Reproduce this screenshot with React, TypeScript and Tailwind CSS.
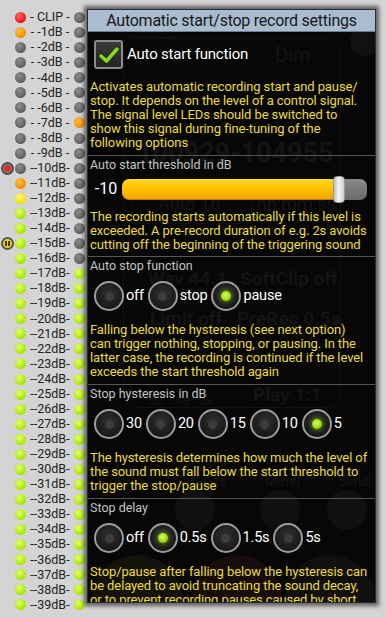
import React from "react";

type LedColor = "gray" | "red" | "orange" | "yellow" | "lime";

const ledClass: Record<LedColor, string> = {
  gray: "bg-[radial-gradient(circle_at_40%_35%,#8c8c8c,#5c5c5c_75%)]",
  red: "bg-[radial-gradient(circle_at_40%_35%,#ff6a6a,#ee0d0d_70%)]",
  orange: "bg-[radial-gradient(circle_at_40%_35%,#ffc04a,#f08c00_70%)]",
  yellow: "bg-[radial-gradient(circle_at_40%_35%,#fff58a,#f2de00_70%)]",
  lime: "bg-[radial-gradient(circle_at_40%_35%,#e2ff6a,#a6e600_70%)]",
};

function leftColor(i: number): LedColor {
  if (i === 0) return "red";
  if (i === 1 || i === 11) return "orange";
  if (i === 12) return "yellow";
  if (i >= 13) return "lime";
  return "gray";
}

function rightColor(i: number): LedColor {
  if (i === 7) return "orange";
  if (i >= 17) return "lime";
  return "gray";
}

function label(i: number) {
  if (i === 0) return "- CLIP -";
  if (i < 10) return `- -${i}dB -`;
  return `--${i}dB-`;
}

function Led({ color }: { color: LedColor }) {
  return <div className={`w-[11px] h-[11px] rounded-full shrink-0 ${ledClass[color]}`} />;
}

function LedColumn() {
  const rows = Array.from({ length: 40 }, (_, i) => i);
  return (
    <div className="w-[87px] shrink-0 pt-[10px] flex flex-col">
      {rows.map((i) => (
        <div key={i} className="h-[15.07px] flex items-center">
          <div className="w-[15px] flex justify-center items-center">
            {i === 10 && (
              <div className="w-[13px] h-[13px] rounded-full border-2 border-[#4a4a4a] bg-[#8a8a8a] flex items-center justify-center">
                <div className="w-[7px] h-[7px] rounded-full bg-[#e02a2a]" />
              </div>
            )}
            {i === 15 && (
              <div className="w-[13px] h-[13px] rounded-full border-2 border-[#555] bg-[#f5d800] flex items-center justify-center gap-[1px]">
                <div className="w-[2px] h-[5px] bg-[#3a3a3a]" />
                <div className="w-[2px] h-[5px] bg-[#3a3a3a]" />
              </div>
            )}
          </div>
          <Led color={leftColor(i)} />
          <div className="w-[48px] text-center whitespace-pre text-[12.5px] leading-none text-[#222]">
            {label(i)}
          </div>
          <Led color={rightColor(i)} />
        </div>
      ))}
    </div>
  );
}

function Radio({ on }: { on?: boolean }) {
  return (
    <div className="w-[30px] h-[30px] shrink-0 rounded-full border-2 border-[#9d9d9d] bg-[radial-gradient(circle_at_50%_40%,#303030,#161616_80%)] flex items-center justify-center">
      {on ? (
        <div className="w-[10px] h-[10px] rounded-full bg-[radial-gradient(circle_at_45%_40%,#d8ff60,#8fd400_70%)] shadow-[0_0_4px_1px_rgba(150,230,0,0.5)]" />
      ) : (
        <div className="w-[9px] h-[9px] rounded-full bg-[#3c3c3c]" />
      )}
    </div>
  );
}

function RadioRow({ items, selected }: { items: string[]; selected: number }) {
  return (
    <div className="flex items-center pl-[4px] mt-[7px]">
      {items.map((t, i) => (
        <div key={t} className="flex items-center mr-[4px]">
          <Radio on={i === selected} />
          <span className="ml-[2px] text-[14.5px] tracking-[-0.2px] text-white">{t}</span>
        </div>
      ))}
    </div>
  );
}

function Divider() {
  return <div className="h-px bg-[#555] mx-[-2px]" />;
}

function Caption({ children }: { children: React.ReactNode }) {
  return <div className="mt-[1px] text-[12.5px] leading-[16px] text-[#c4c4c4]">{children}</div>;
}

function Help({ children, className = "" }: { children: React.ReactNode; className?: string }) {
  return (
    <p className={`pr-[4px] text-[13px] tracking-[-0.1px] leading-[14px] text-[#ecda3c] ${className}`}>
      {children}
    </p>
  );
}

// the recorder screen that shows faintly through the dialog
function Backdrop() {
  return (
    <div className="absolute inset-0 text-[#141414] whitespace-nowrap pointer-events-none">
      <div className="absolute left-[35px] top-[6px] w-[218px] h-[370px] rounded-[14px] border border-[#111]" />
      <div className="absolute left-[262px] top-[-6px] w-[30px] h-[30px] rounded-full bg-[#111]" />
      <div className="absolute left-[40px] top-[2px] text-[5px] text-[#221414]">PfitzingerVoiceDesign</div>
      <div className="absolute left-[187px] top-[8px] text-[20px]">Dim</div>
      <div className="absolute left-[49px] top-[101px] text-[27px] font-bold">100929-104955</div>
      <div className="absolute left-[44px] top-[148px] w-[120px] h-[44px] border border-[#121212]" />
      <div className="absolute left-[70px] top-[158px] text-[18px]">Auto 16</div>
      <div className="absolute left-[169px] top-[158px] text-[18px]">hh:mm:ss</div>
      <div className="absolute left-[60px] top-[233px] text-[19px] font-bold">Wav 44.1</div>
      <div className="absolute left-[152px] top-[233px] text-[19px] font-bold">SoftClip off</div>
      <div className="absolute left-[88px] top-[252px] text-[10px]">ntative</div>
      <div className="absolute left-[62px] top-[273px] text-[19px] font-bold">Limit off</div>
      <div className="absolute left-[149px] top-[273px] text-[19px] font-bold">PreRec 0.5s</div>
      <div className="absolute left-[165px] top-[349px] text-[19px] font-bold">Play 1:1</div>
      <div className="absolute left-[60px] top-[364px] text-[9px]">100&nbsp;&nbsp;&nbsp;1kHz&nbsp;&nbsp;&nbsp;10k</div>
      <div className="absolute left-[25px] top-[439px] text-[14px]">Auto</div>
      <div className="absolute left-[87px] top-[439px] text-[14px]">Settings</div>
      <div className="absolute left-[177px] top-[439px] text-[14px]">Meter</div>
      <div className="absolute left-[250px] top-[439px] text-[14px]">Send</div>
      <div className="absolute left-[87px] top-[458px] w-[40px] h-[40px] rounded-full bg-[#101010]" />
      <div className="absolute left-[172px] top-[458px] w-[40px] h-[40px] rounded-full bg-[#101010]" />
      <div className="absolute left-[239px] top-[458px] w-[40px] h-[40px] rounded-full bg-[#101010]" />
      <div className="absolute left-[4px] top-[523px] w-[90px] h-[90px] rounded-full bg-[#14130b]" />
      <div className="absolute left-[104px] top-[523px] w-[90px] h-[90px] rounded-full bg-[#170d0d]" />
      <div className="absolute left-[197px] top-[523px] w-[90px] h-[90px] rounded-full bg-[#101010]" />
    </div>
  );
}

export default function App() {
  return (
    <div className="w-[386px] h-[618px] overflow-hidden bg-[#d4d4d4] flex relative font-['Roboto','Liberation_Sans',sans-serif]">
      <LedColumn />

      {/* settings dialog */}
      <div className="relative mt-[9px] w-[289px] h-[594px] shrink-0 border border-[#2c2c2c] bg-[#070707] shadow-[0_0_4px_3px_rgba(0,0,0,0.55)] flex flex-col overflow-hidden">
        <div className="h-[22px] shrink-0 bg-[#a9bcd0] border-b border-[#6f7f90] text-center text-[16px] tracking-[-0.25px] leading-[21px] text-[#181818]">
          Automatic start/stop record settings
        </div>

        <div className="relative flex-1 overflow-hidden px-[2px]">
          <Backdrop />
          <div className="relative">
            {/* auto start */}
            <div className="flex items-center pt-[8px] pl-[4px]">
              <div className="w-[29px] h-[29px] rounded-[3px] border-2 border-[#8c8c8c] bg-[linear-gradient(#3a3a3a,#242424)] flex items-center justify-center">
                <svg width="22" height="20" viewBox="0 0 22 20">
                  <path d="M3 11 L8.5 16 L19 4" fill="none" stroke="#1c3a00" strokeWidth="5.5" strokeLinecap="round" strokeLinejoin="round" />
                  <path d="M3 11 L8.5 16 L19 4" fill="none" stroke="#86d82a" strokeWidth="3.5" strokeLinecap="round" strokeLinejoin="round" />
                </svg>
              </div>
              <span className="ml-[4px] text-[15px] tracking-[-0.2px] text-white">Auto start function</span>
            </div>
            <Help className="mt-[11px] mb-[5px]">
              Activates automatic recording start and pause/ stop. It depends on the level of a control signal. The signal
              level LEDs should be switched to show this signal during fine-tuning of the following options
            </Help>

            <Divider />
            <Caption>Auto start threshold in dB</Caption>
            <div className="flex items-center h-[28px] mt-[2px]">
              <span className="w-[32px] text-center text-[16px] text-white">-10</span>
              <div className="flex items-center flex-1 mr-[6px]">
                <div className="h-[21px] flex-1 rounded-l-[7px] bg-[linear-gradient(#ffd92a,#ffc400_45%,#f0a400)] border-b border-[#c07800]" />
                <div className="w-[12px] h-[27px] rounded-[4px] border border-[#9a9a9a] bg-[linear-gradient(90deg,#bdbdbd,#f4f4f4_45%,#cfcfcf)] -mx-[1px] relative z-10" />
                <div className="w-[23px] h-[21px] rounded-r-[7px] bg-[linear-gradient(#8a8a8a,#6a6a6a)]" />
              </div>
            </div>
            <Help className="mt-[7px] mb-[4px]">
              The recording starts automatically if this level is exceeded. A pre-record duration of e.g. 2s avoids
              cutting off the beginning of the triggering sound
            </Help>

            <Divider />
            <Caption>Auto stop function</Caption>
            <RadioRow items={["off", "stop", "pause"]} selected={2} />
            <Help className="mt-[12px] mb-[5px]">
              Falling below the hysteresis (see next option) can trigger nothing, stopping, or pausing. In the latter case,
              the recording is continued if the level exceeds the start threshold again
            </Help>

            <Divider />
            <Caption>Stop hysteresis in dB</Caption>
            <RadioRow items={["30", "20", "15", "10", "5"]} selected={4} />
            <Help className="mt-[12px] mb-[5px]">
              The hysteresis determines how much the level of the sound must fall below the start threshold to trigger the
              stop/pause
            </Help>

            <Divider />
            <Caption>Stop delay</Caption>
            <RadioRow items={["off", "0.5s", "1.5s", "5s"]} selected={1} />
            <Help className="mt-[12px]">
              Stop/pause after falling below the hysteresis can be delayed to avoid truncating the sound decay, or to
              prevent recording pauses caused by short silences
            </Help>
          </div>
        </div>
      </div>
    </div>
  );
}
